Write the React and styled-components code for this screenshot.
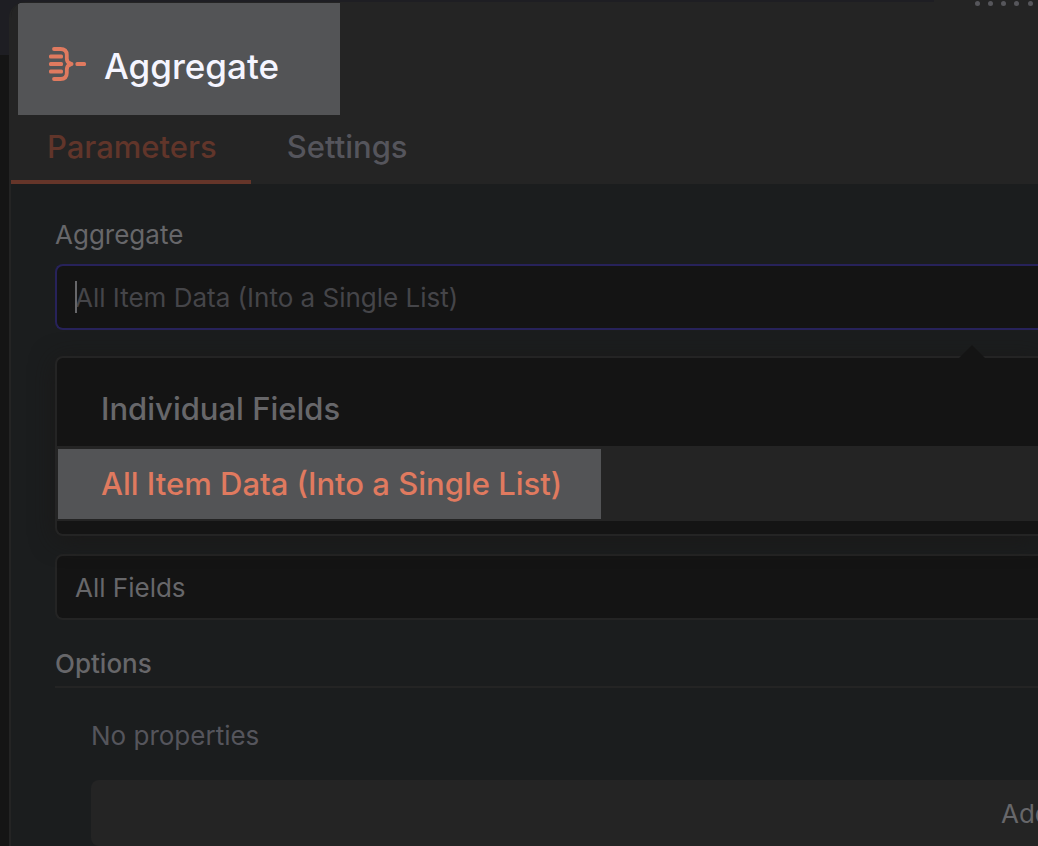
import { useState } from 'react';
import styled, { createGlobalStyle } from 'styled-components';

const OPTIONS = ['Individual Fields', 'All Item Data (Into a Single List)'];

const AggregateIcon = () => (
    <svg width="39" height="36" viewBox="0 0 39 36" aria-hidden="true">
        <path
            d="M6 3H12.5Q18.8 3 18.8 9V12.5Q18.8 16.5 22.5 18Q18.8 19.5 18.8 23.5V27Q18.8 33 12.5 33H6"
            fill="none"
            stroke="#e07a5f"
            strokeWidth="3.8"
            strokeLinecap="round"
            strokeLinejoin="round"
        />
        <g fill="#e07a5f">
            <path d="M19 14L25 16.6Q26 18 25 19.4L19 22Z" />
            <rect x="1" y="8.5" width="14" height="4" rx="1.5" />
            <rect x="1" y="16" width="14" height="4" rx="1.5" />
            <rect x="1" y="23.5" width="14" height="4" rx="1.5" />
            <rect x="27.5" y="16" width="10.5" height="4" rx="1.5" />
        </g>
    </svg>
);

const DragDots = () => (
    <svg width="68" height="6" viewBox="0 0 68 6" fill="#56565b" aria-hidden="true">
        {[7, 20, 33, 46, 60].map((x) => (
            <circle key={x} cx={x + 0.5} cy="3.5" r="2.5" />
        ))}
    </svg>
);

const App = () => {
    const [tab, setTab] = useState('Parameters');
    const [selected, setSelected] = useState(OPTIONS[1]);

    return (
        <>
            <GlobalStyle />
            <Page>
                <Rail />
                <Main>
                    <HandleStrip>
                        <Handle><DragDots /></Handle>
                    </HandleStrip>
                    <Panel>
                        <Header>
                            <TitleBox>
                                <AggregateIcon />
                                <Title>Aggregate</Title>
                            </TitleBox>
                            <Tabs>
                                {['Parameters', 'Settings'].map((name) => (
                                    <Tab key={name} $active={tab === name} onClick={() => setTab(name)}>{name}</Tab>
                                ))}
                            </Tabs>
                        </Header>
                        <Content>
                            <Label htmlFor="aggregate">Aggregate</Label>
                            <Field>
                                <StyledInput id="aggregate" placeholder={selected} autoComplete="off" />
                                <Caret />
                            </Field>
                            <Menu>
                                {OPTIONS.map((option) => (
                                    <MenuItem key={option} $active={selected === option} onClick={() => setSelected(option)}>
                                        <ItemText $active={selected === option}>{option}</ItemText>
                                    </MenuItem>
                                ))}
                            </Menu>
                            <StyledSelect aria-label="Include">
                                <option>All Fields</option>
                            </StyledSelect>
                            <SectionTitle>Options</SectionTitle>
                            <Properties>
                                <Empty>No properties</Empty>
                                <AddButton><span>Add</span></AddButton>
                            </Properties>
                        </Content>
                    </Panel>
                </Main>
            </Page>
        </>
    );
};

export default App;

const GlobalStyle = createGlobalStyle`
    * {
        box-sizing: border-box;
    }
    body {
        margin: 0;
        background: #1e1e23;
        font-family: Inter, 'Liberation Sans', sans-serif;
        overflow: hidden;
    }
    button, input, select {
        font-family: inherit;
    }
`;

const Page = styled.div`
    display: grid;
    grid-template-columns: 9px 1fr;
    min-height: 100vh;
`;

const Rail = styled.div`
    margin-top: 55px;
    background: #151515;
`;

const Main = styled.main`
    display: flex;
    flex-direction: column;
    min-width: 0;
`;

const HandleStrip = styled.div`
    display: flex;
    justify-content: flex-end;
    height: 2px;
`;

const Handle = styled.div`
    display: flex;
    justify-content: flex-end;
    align-items: flex-start;
    width: 104px;
    background: #242424;

    svg {
        position: relative;
        flex: none;
    }
`;

const Panel = styled.section`
    flex: 1;
    border-left: 2px solid #242424;
    border-top-left-radius: 16px;
    background: #1b1d1e;
    overflow: hidden;
`;

const Header = styled.header`
    padding-top: 1px;
    background: #242424;
`;

const TitleBox = styled.div`
    display: flex;
    align-items: center;
    gap: 17px;
    width: 322px;
    height: 112px;
    margin-left: 7px;
    padding: 0 30px;
    background: #535456;

    svg {
        flex: none;
        margin-top: 10px;
    }
`;

const Title = styled.h1`
    margin: 0;
    padding-top: 14px;
    color: #f5f5ff;
    font-size: 35px;
    font-weight: 500;
    line-height: 44px;
`;

const Tabs = styled.nav`
    display: flex;
`;

const Tab = styled.button`
    height: 69px;
    padding: 0 34px 2px 36px;
    border: none;
    border-bottom: 4px solid ${(props) => (props.$active ? '#653529' : 'transparent')};
    background: none;
    color: ${(props) => (props.$active ? '#61352a' : '#55555c')};
    font-size: 31px;
    font-weight: 500;
    cursor: pointer;
`;

const Content = styled.div`
    display: flex;
    flex-direction: column;
    padding: 35px 0 0 44px;
`;

const Label = styled.label`
    margin-bottom: 13px;
    color: #67676a;
    font-size: 26px;
    line-height: 32px;
`;

const Field = styled.div`
    position: relative;
    display: flex;
`;

const StyledInput = styled.input`
    flex: 1;
    min-width: 0;
    height: 66px;
    padding: 0 18px;
    border: 2px solid #27225a;
    border-right: none;
    border-radius: 8px 0 0 8px;
    outline: none;
    background: #141414;
    color: #67676a;
    font-size: 26px;

    &::placeholder {
        color: #454549;
        opacity: 1;
    }
`;

const Caret = styled.span`
    position: absolute;
    top: 17px;
    left: 20px;
    width: 2px;
    height: 32px;
    background: #67676a;
`;

const Menu = styled.div`
    position: relative;
    display: flex;
    flex-direction: column;
    margin: 26px 0 18px;
    padding: 13px 0;
    border: 2px solid #242424;
    border-right: none;
    border-radius: 8px 0 0 8px;
    background: #141414;
    box-shadow: 0 4px 24px rgba(26, 24, 22, 0.8);

    &::before {
        content: '';
        position: absolute;
        top: -13px;
        right: 53px;
        border: 13px solid transparent;
        border-top: none;
        border-bottom-color: #141414;
    }
`;

const MenuItem = styled.button`
    display: flex;
    height: 75px;
    padding: 3px 1px 2px;
    border: none;
    background: ${(props) => (props.$active ? '#242424' : 'transparent')};
    cursor: pointer;
`;

const ItemText = styled.span`
    display: flex;
    align-items: center;
    height: 70px;
    padding: 0 39px 2px 43px;
    background: ${(props) => (props.$active ? '#535456' : 'transparent')};
    color: ${(props) => (props.$active ? '#e07a5f' : '#67676a')};
    font-size: 31px;
    font-weight: 500;
`;

const StyledSelect = styled.select`
    height: 66px;
    padding: 0 18px;
    border: 2px solid #242424;
    border-right: none;
    border-radius: 8px 0 0 8px;
    appearance: none;
    outline: none;
    background: #141414;
    color: #67676a;
    font-size: 26px;
`;

const SectionTitle = styled.h2`
    margin: 28px 0 0;
    padding-bottom: 6px;
    border-bottom: 2px solid #242424;
    color: #67676a;
    font-size: 26px;
    font-weight: 500;
    line-height: 32px;
`;

const Properties = styled.div`
    display: flex;
    flex-direction: column;
    padding: 32px 0 0 36px;
`;

const Empty = styled.p`
    margin: 0 0 28px;
    color: #55555c;
    font-size: 26px;
    line-height: 32px;
`;

const AddButton = styled.button`
    display: flex;
    justify-content: flex-end;
    align-items: center;
    height: 66px;
    padding: 0;
    border: none;
    border-radius: 8px 0 0 8px;
    background: #242424;
    color: #67676a;
    font-size: 26px;
    overflow: hidden;
    cursor: pointer;

    span {
        width: 37px;
        text-align: left;
        white-space: nowrap;
    }
`;
